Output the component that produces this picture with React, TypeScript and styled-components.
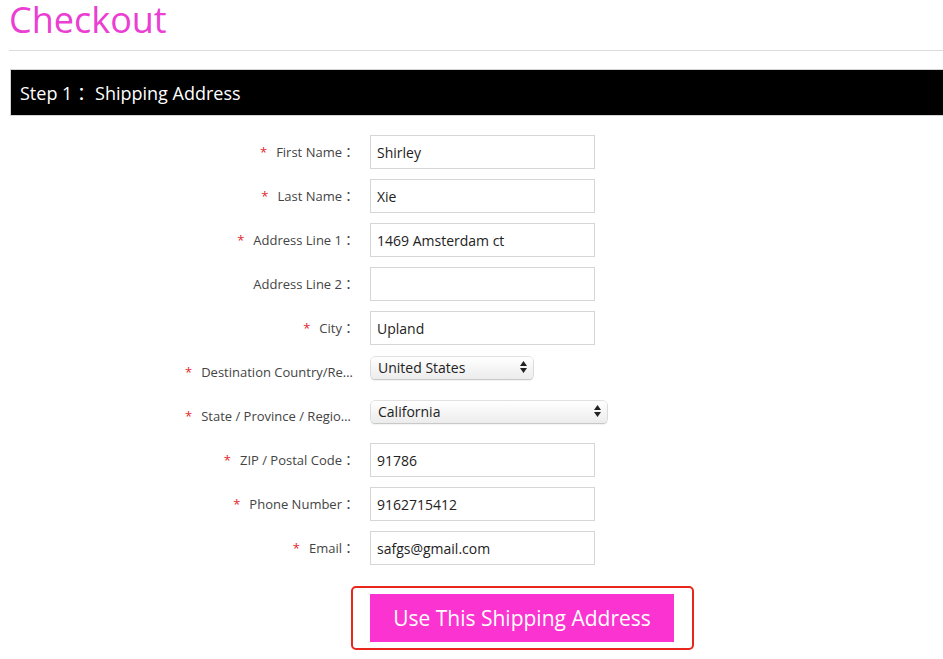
import React from 'react';
import styled, { createGlobalStyle } from 'styled-components';

const GlobalStyle = createGlobalStyle`
  body {
    margin: 0;
    background: #fff;
    font-family: "Open Sans", "Noto Sans CJK TC", sans-serif;
    overflow: hidden;
  }
`;

const Page = styled.div`
  padding-left: 9px;
`;

const Title = styled.h1`
  margin: 0;
  font-size: 36px;
  line-height: 40px;
  font-weight: 400;
  color: #ea3fd2;
`;

const Rule = styled.div`
  margin-top: 10px;
  height: 1px;
  background: #dcdcdc;
`;

const StepBar = styled.div`
  margin-top: 18px;
  margin-left: 1px;
  height: 45px;
  display: flex;
  align-items: center;
  padding-left: 9px;
  background: #000;
  border: 1px solid #d4d4d4;
  border-right: none;
  color: #fff;
  font-size: 18px;
  white-space: pre;
`;

const Colon = styled.span`
  font-family: "Noto Sans CJK TC", sans-serif;
`;

const Form = styled.div`
  display: grid;
  grid-template-columns: 170px 240px;
  grid-auto-rows: 34px;
  row-gap: 10px;
  column-gap: 15px;
  padding: 19px 0 0 176px;
`;

const Label = styled.label`
  align-self: center;
  margin-top: -1px;
  text-align: right;
  white-space: nowrap;
  overflow: hidden;
  text-overflow: ellipsis;
  font-size: 13px;
  color: #444;
`;

const Star = styled.span`
  color: #e4262a;
  margin-right: 9px;
`;

const TextInput = styled.input`
  box-sizing: border-box;
  width: 225px;
  height: 34px;
  padding: 0 6px;
  border: 1px solid #d6d6d6;
  font-family: "Open Sans", sans-serif;
  font-size: 14px;
  color: #222;
  outline: none;
`;

const SelectWrap = styled.div<{ $width: number }>`
  position: relative;
  align-self: start;
  margin: 1px 0 0 1px;
  width: ${(p) => p.$width}px;
  height: 22px;
`;

const Select = styled.select`
  appearance: none;
  box-sizing: border-box;
  width: 100%;
  height: 100%;
  padding: 0 20px 0 7px;
  border: none;
  border-radius: 4px;
  background: linear-gradient(#ffffff, #ececec);
  box-shadow: 0 0 0 0.5px #c4c4c4, 0 1px 1.5px rgba(0, 0, 0, 0.25);
  font-family: "Open Sans", sans-serif;
  font-size: 14px;
  color: #222;
  outline: none;
`;

const Arrows = styled.svg`
  position: absolute;
  right: 6px;
  top: 5px;
  pointer-events: none;
`;

const Actions = styled.div`
  padding: 21px 0 0 342px;
`;

const Highlight = styled.div`
  display: inline-block;
  padding: 6px 18px 6px 17px;
  border: 2px solid #e8261c;
  border-radius: 5px;
`;

const SubmitButton = styled.button`
  width: 304px;
  height: 48px;
  border: none;
  background: #fb33d0;
  color: #fff;
  font-family: "Open Sans", sans-serif;
  font-size: 21px;
  cursor: pointer;
`;

type Field = { label: string; value?: string; required: boolean; select?: number; options?: string[] };

const fields: Field[] = [
  { label: 'First Name', value: 'Shirley', required: true },
  { label: 'Last Name', value: 'Xie', required: true },
  { label: 'Address Line 1', value: '1469 Amsterdam ct', required: true },
  { label: 'Address Line 2', value: '', required: false },
  { label: 'City', value: 'Upland', required: true },
  { label: 'Destination Country/Region', required: true, select: 162, options: ['United States'] },
  { label: 'State / Province / Region', required: true, select: 236, options: ['California'] },
  { label: 'ZIP / Postal Code', value: '91786', required: true },
  { label: 'Phone Number', value: '9162715412', required: true },
  { label: 'Email', value: 'safgs@gmail.com', required: true },
];

function App() {
  return (
    <Page>
      <GlobalStyle />
      <Title>Checkout</Title>
      <Rule />
      <StepBar>
        Step 1<Colon>：</Colon> Shipping Address
      </StepBar>
      <Form>
        {fields.map((f) => (
          <React.Fragment key={f.label}>
            <Label>
              {f.required && <Star>*</Star>}
              {f.label}
              <Colon>：</Colon>
            </Label>
            {f.select ? (
              <SelectWrap $width={f.select}>
                <Select defaultValue={f.options![0]}>
                  {f.options!.map((o) => (
                    <option key={o}>{o}</option>
                  ))}
                </Select>
                <Arrows width="7" height="12" viewBox="0 0 7 12">
                  <path d="M3.5 0 L7 5 L0 5 Z M0 7 L7 7 L3.5 12 Z" fill="#222" />
                </Arrows>
              </SelectWrap>
            ) : (
              <TextInput defaultValue={f.value} />
            )}
          </React.Fragment>
        ))}
      </Form>
      <Actions>
        <Highlight>
          <SubmitButton>Use This Shipping Address</SubmitButton>
        </Highlight>
      </Actions>
    </Page>
  );
}

export default App;
